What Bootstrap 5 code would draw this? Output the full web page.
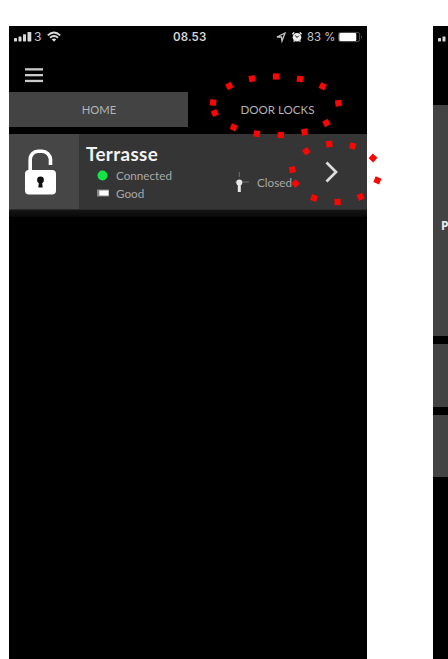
<!DOCTYPE html>
<html lang="en">
<head>
<meta charset="utf-8">
<meta name="viewport" content="width=device-width, initial-scale=1">
<title>Door locks</title>
<link href="https://cdn.jsdelivr.net/npm/bootstrap@5.3.0/dist/css/bootstrap.min.css" rel="stylesheet">
<style>
body{width:448px;height:659px;overflow:hidden;background:#fff;font-family:Lato,"Open Sans",sans-serif}
svg{display:block;flex:none}
.stage{height:659px;padding:26px 0 0 9px;gap:66px}
.phone{width:358px;background:#000;color:#b4b4b4}
.phone-next{width:15px;background:#000;overflow:hidden}
.status{height:28px;font:12px/28px Inter,"Liberation Sans",sans-serif;color:#c8c8c8;padding:0 0 0 5px;margin-top:-3px}
.carrier{width:14px;padding-left:1px}
.clock{width:36px;margin-left:112px;font-weight:600;font-size:11.5px;letter-spacing:.1px;color:#d5d5d5}
.pct{width:31px;font-size:11.3px;white-space:nowrap}
.batt{margin-right:4px}
.menu{height:41px;padding:17px 0 0 16px}
.tabs>div{height:35px;line-height:35px;font-size:11.6px}
.tab-home{width:179px;background:#434343}
.tab-home span{padding-left:1px;font-size:11.2px}
.lock-row{height:76px;margin-top:7px;background:#353535;border-bottom:1px solid #2a2a2a}
.lock-cell{width:70px;background:#464646;padding:15px 0 0 16px}
.info{width:142px;padding:8px 0 0 7px}
.title{font-size:18.8px;line-height:24px;letter-spacing:.4px;font-weight:700;color:#f3f3f3}
.meta{font-size:11.7px;line-height:18px;height:18px;color:#a8a8a8}
.meta-icon{width:30px;padding-left:11px}
.door{width:84px;padding:38px 0 0 13px}
.closed{padding:1px 0 0 8px}
.chev{padding:27px 0 0 20px}
.row-shade{height:7px;background:linear-gradient(#151515,#080808)}
.panel{background:#434343}
.big-panel{height:231px;margin-top:54px;padding:111px 0 0 8px;font:bold 12px/20px "Open Sans",sans-serif;color:#eee}
.side-a{height:63px;margin-top:8px}
.side-b{height:62px;margin-top:8px}
</style>
<script src="https://cdn.jsdelivr.net/npm/bootstrap@5.3.0/dist/js/bootstrap.bundle.min.js"></script>
</head>
<body>
<div class="stage d-flex position-relative">
  <main class="phone">
    <div class="status d-flex align-items-center">
      <svg width="19" height="12" viewBox="0 0 19 12" fill="#d8d8d8"><rect y="7" width="3" height="3.4" rx=".6"/><rect x="4.5" y="5.5" width="3" height="4.9" rx=".6"/><rect x="9" y="3.3" width="3" height="7.1" rx=".6"/><rect x="13.5" y="1" width="3.8" height="9.4" rx=".6"/></svg>
      <span class="carrier">3</span>
      <svg width="14" height="12" viewBox="0 0 14 12" fill="none" stroke="#ddd" stroke-width="1.9"><path d="M.8 4.4Q7-1.2 13.2 4.4M3 6.8Q7 3.3 11 6.8"/><path d="M4.7 8.3Q7 6.5 9.3 8.3L7 10.7Z" fill="#ddd" stroke="none"/></svg>
      <span class="clock">08.53</span>
      <svg class="ms-auto" width="11" height="12" viewBox="0 0 11 12" fill="none" stroke="#c8c8c8" stroke-width="1.3"><path d="M1 6 9 2 6 10 5.4 6Z"/></svg>
      <svg class="ms-1 me-1" width="12" height="12" viewBox="0 0 12 12"><circle cx="6" cy="6.3" r="4.3" fill="#eee"/><path d="M1.4 3.2 3.3 1.4M8.7 1.4 10.6 3.2M2.6 10.6 3.4 9.8M9.4 10.6 8.6 9.8" stroke="#ddd" stroke-width="1.5"/><path d="M4.3 4.4 6 6.5 7.8 4.7" fill="none" stroke="#111" stroke-width="1"/></svg>
      <span class="pct">83 %</span>
      <svg class="batt" width="25" height="12" viewBox="0 0 25 12"><rect x=".6" y="1.4" width="21" height="9.2" rx="2" fill="none" stroke="#555"/><rect x="1.3" y="2" width="17" height="8" rx="1" fill="#fff"/><path d="M23 4.5q1.7 1.5 0 3Z" fill="#777"/></svg>
    </div>
    <div class="menu"><svg width="18" height="16" viewBox="0 0 18 16" fill="#cacaca"><rect y=".2" width="18" height="2.3"/><rect y="6" width="18" height="2.3"/><rect y="11.8" width="18" height="2.3"/></svg></div>
    <div class="tabs d-flex text-center">
      <div class="tab-home"><span>HOME</span></div>
      <div class="flex-fill">DOOR LOCKS</div>
    </div>
    <div class="lock-row d-flex">
      <div class="lock-cell"><svg width="32" height="48" viewBox="0 0 32 48"><path d="M5.2 24V10.5A8 8 0 0 1 13 2.3H17A8.6 8.6 0 0 1 25.5 10.5V16" fill="none" stroke="#fff" stroke-width="3.6"/><rect y="21" width="31" height="24.5" rx="4" fill="#fff"/><circle cx="15.5" cy="31" r="3.4" fill="#111"/><path d="M14 32h3l.7 6.5h-4.4Z" fill="#111"/></svg></div>
      <div class="info">
        <div class="title">Terrasse</div>
        <div class="meta d-flex align-items-center"><span class="meta-icon"><svg width="11" height="11"><circle cx="5.5" cy="5.5" r="5" fill="#13e548"/></svg></span><span>Connected</span></div>
        <div class="meta d-flex align-items-center"><span class="meta-icon"><svg width="13" height="8"><rect y=".5" width="12" height="7" fill="#888"/><rect x="2.3" y="1.5" width="9.2" height="5" fill="#fff"/></svg></span><span>Good</span></div>
      </div>
      <div class="door d-flex align-items-start">
        <svg width="15" height="22" viewBox="0 0 15 22"><path d="M5.3 0V5M1 10h3M7 10h8" stroke="#707070"/><circle cx="5.3" cy="10.5" r="3" fill="#e8e8e8"/><rect x="3.8" y="11" width="3" height="9" fill="#e8e8e8"/></svg>
        <span class="meta closed">Closed</span>
      </div>
      <div class="chev"><svg width="14" height="22" viewBox="0 0 14 22" fill="none" stroke="#ddd" stroke-width="2.7"><path d="M1.5 1.5 11 11 1.5 20.5"/></svg></div>
    </div>
    <div class="row-shade"></div>
  </main>
  <aside class="phone-next">
    <div class="status"><svg width="19" height="28" viewBox="0 -8 19 28" fill="#d8d8d8"><rect y="7" width="3" height="3.4" rx=".6"/><rect x="4.5" y="5.5" width="3" height="4.9" rx=".6"/></svg></div>
    <div class="panel big-panel">P</div>
    <div class="panel side-a"></div>
    <div class="panel side-b"></div>
  </aside>
  <svg class="position-absolute top-0 start-0" width="448" height="659" fill="#fb0505">
    <defs><rect id="dot" x="-3.1" y="-3.1" width="6.2" height="6.2"/></defs>
    <use href="#dot" transform="translate(229.3 86) rotate(-28)"/><use href="#dot" transform="translate(252 78.7) rotate(-10)"/><use href="#dot" transform="translate(276 76.5)"/><use href="#dot" transform="translate(300 79) rotate(10)"/><use href="#dot" transform="translate(322.7 86.3) rotate(26)"/><use href="#dot" transform="translate(338.4 103.2) rotate(-8)"/><use href="#dot" transform="translate(326.4 122.9) rotate(-30)"/><use href="#dot" transform="translate(304.6 132) rotate(-12)"/><use href="#dot" transform="translate(280.8 135)"/><use href="#dot" transform="translate(256.8 133.7) rotate(8)"/><use href="#dot" transform="translate(233.7 127.4) rotate(22)"/><use href="#dot" transform="translate(214.8 113) rotate(-25)"/><use href="#dot" transform="translate(213.1 102.6) rotate(8)"/>
    <use href="#dot" transform="translate(329.3 144) rotate(-6)"/><use href="#dot" transform="translate(352.7 146) rotate(14)"/><use href="#dot" transform="translate(373 158) rotate(42)"/><use href="#dot" transform="translate(377.4 180.4) rotate(22)"/><use href="#dot" transform="translate(360.6 196.8) rotate(-25)"/><use href="#dot" transform="translate(337.6 202) rotate(-3)"/><use href="#dot" transform="translate(314 198) rotate(18)"/><use href="#dot" transform="translate(295.6 183.6) rotate(45)"/><use href="#dot" transform="translate(292.4 169.6) rotate(-12)"/><use href="#dot" transform="translate(306.3 151.2) rotate(-35)"/>
  </svg>
</div>
</body>
</html>
